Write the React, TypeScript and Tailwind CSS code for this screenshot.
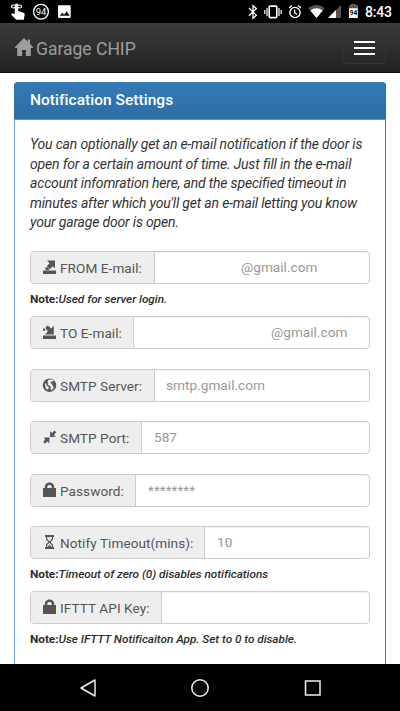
import type { ReactNode } from "react";

function StatusBar() {
  return (
    <header className="flex h-[23px] shrink-0 items-center bg-black text-white">
      <svg className="h-[23px] w-[100px]" viewBox="0 0 100 23" fill="none">
        <path d="M11.500 6.500c0-2 3-2 5 0 2-2 5-2 5 0s-3 2-5 0c-2 2-5 2-5 0Z" stroke="#fff" strokeWidth="1.200" />
        <path d="M14.800 4.300q1.700-1.500 3.400 0V11l5.200 1.800c1.500.5 1.400 1.200 1.200 2.300l-.8 4.600h-7.500L11 14.500l1.200-1.200 2.600.700Z" fill="#fff" />
        <circle cx="41" cy="11.700" r="7.400" stroke="#fff" strokeWidth="1.300" />
        <text x="41" y="15.100" textAnchor="middle" fill="#fff" fontSize="9.500" fontFamily="Roboto, sans-serif">94</text>
        <rect x="58" y="5.300" width="12.700" height="12.700" rx="1.200" fill="#fff" />
        <path d="m59.800 15.700 2.400-3 1.900 2 2.600-3.400 3 4.400Z" fill="#111" />
      </svg>
      <svg className="ml-auto h-[23px] w-[120px]" viewBox="245 0 120 23" fill="none">
        <path d="m249 8 7.400 7.300-3.400 3V5.700l3.400 2.800-7.400 7.300" stroke="#fff" strokeWidth="1.300" />
        <rect x="269.200" y="6.100" width="7.600" height="11.500" rx="1" stroke="#fff" strokeWidth="1.600" />
        <path d="M267 8v8m-2.200-6v4M279 8v8m2.200-6v4" stroke="#fff" strokeWidth="1.200" />
        <circle cx="295" cy="12.500" r="5.100" stroke="#fff" strokeWidth="1.400" />
        <path d="M294.700 9.500v3.300l2.500 1.500M289 8l3-2.500m6 0 3 2.500" stroke="#fff" strokeWidth="1.200" />
        <path d="M308.200 8q8.300-6 16.600 0l-8.300 10Z" fill="#555" />
        <path d="M310.300 10.500q6.200-4.500 12.400 0l-6.200 7.500Z" fill="#fff" />
        <path d="m328 18 13-13v13Z" fill="#555" />
        <path d="m328 18 8-8V18Z" fill="#fff" />
        <path d="M349 5.700h2.300V4.300h4v1.400h2.500V18H349Z" fill="#fff" />
        <path d="M351.300 4.300h4v1.400h2.500v2.600H349V5.700h2.300Z" fill="#555" />
        <text x="353.400" y="14.800" textAnchor="middle" fill="#000" fontSize="6.500" fontWeight="700" fontFamily="Roboto, sans-serif">94</text>
      </svg>
      <span className="mt-px mr-[8px] w-[27px] text-[14px] leading-[20px] font-medium tracking-[-0.200px] whitespace-nowrap">8:43</span>
    </header>
  );
}

function Navbar() {
  return (
    <nav className="flex h-[50px] shrink-0 items-center border-b border-[#101010] bg-linear-to-b from-[#3c3c3c] to-[#222] pr-[14px] pl-[15px] text-[#9d9d9d]">
      <svg className="mb-px h-[18px] w-[18px]" viewBox="0 0 18 18" fill="currentColor">
        <path d="m9 0 3.600 3.600V1.500H15v4.500L18 9v1h-2.200v8h-4.900v-6H7.100v6H2.200v-8H0V9Z" />
      </svg>
      <span className="mt-[3px] ml-[3px] text-[17.500px] leading-[20px] whitespace-nowrap">Garage CHIP</span>
      <button className="ml-auto flex h-[33px] w-[43px] flex-col items-center justify-center gap-[4px] rounded border border-[#333]">
        <span className="h-[2px] w-[21px] bg-white" />
        <span className="h-[2px] w-[21px] bg-white" />
        <span className="h-[2px] w-[21px] bg-white" />
      </button>
    </nav>
  );
}

const icons: Record<string, ReactNode> = {
  from: <path d="M0 10.500h13V14H0ZM4 .500h8V8.300L9.800 6.200 6.800 9.200 3.800 6.300 6.600 3.200ZM2.500 7.200h1.700l2 2V10H2.500Z" />,
  to: <path d="M0 10.500h13V14H0ZM2.300 2.800 4.800.300 8 3.500 10.800.800V9.500H2l2.800-3ZM0 3.500h2.200v2.200H0Z" />,
  globe: (
    <>
      <circle cx="6.500" cy="7.300" r="6.700" />
      <path fill="#eee" d="M5.600 1.800 9 1.500l1.800 1.400-1.400.8-1.300-.5-.4 1.700 1.300 1 .6 2.200 1 .3-.3 2-2 2.200-.9-2.700.3-1.700-1.800-.6-1.500-1.600.8-1.700-.8-.9ZM1.400 5.200l1.500.5 1.200 2.200 1.700 1-.3 2-1 .9-2-1.800-.1-2Z" />
    </>
  ),
  resize: <path d="m7 7 .2-6 1.900 1.900 2.400-2.400L13.300 2.300l-2.400 2.400 2.100 2ZM6.500 7.300 6.200 13.300l-2-1.900L2 13.700.200 11.900l2.200-2.300L.500 7.700Z" />,
  lock: <path fillRule="evenodd" d="M1.800 5V4c0-6 9.400-6 9.400 0v1h1.300q.5 0 .5.500V14H0V5.500Q0 5 .5 5Zm2.500 0h4.400V4c0-2.600-4.400-2.600-4.400 0Z" />,
  hourglass: <path fillRule="evenodd" d="M2 0h9v2h-1v2.500L7.700 7 10 9.700V12h1v2H2v-2h1V9.700L5.300 7 3 4.500V2H2Zm2.200 2v2L6.500 6.500v1.200L4.200 10v2h.5L6.500 9.500 8.300 12h.5v-2L6.500 7.700V6.500L8.800 4V2Z" />,
};

interface FieldProps {
  icon: string;
  label: string;
  width: string;
  value?: string;
  inputClass?: string;
}

function Field({ icon, label, width, value, inputClass = "pl-[12px]" }: FieldProps) {
  return (
    <div className="flex h-[33px] w-full overflow-hidden rounded-[4px] border border-[#ccc] bg-white">
      <div className={`flex shrink-0 items-center border-r border-[#ccc] bg-[#eee] pl-[12px] text-[#555] ${width}`}>
        <svg className="mb-px h-[14px] w-[13px] shrink-0 overflow-visible" viewBox="0 0 13 14" fill="currentColor">{icons[icon]}</svg>
        <span className="mt-[2px] ml-[4px] text-[13.600px] leading-[19px] tracking-[0.060px] whitespace-nowrap">{label}</span>
      </div>
      <div className={`flex flex-1 items-center text-[13.600px] leading-[19px] tracking-[0.030px] text-[#999] shadow-[inset_0_1px_1px_#00000010] ${inputClass}`}>{value}</div>
    </div>
  );
}

function Note({ children }: { children: string }) {
  return (
    <p className="flex h-[32px] items-center pb-px text-[11.800px] leading-[16px] font-medium tracking-[-0.040px] whitespace-nowrap text-[#2c2c2c]">
      <b className="font-bold">Note:</b>
      <i>{children}</i>
    </p>
  );
}

export default function App() {
  return (
    <div className="flex h-[711px] w-[400px] flex-col overflow-hidden bg-white font-[Roboto,sans-serif]">
      <StatusBar />
      <Navbar />
      <main className="min-h-0 flex-1 overflow-hidden px-[14px] pt-[9px]">
        <section className="h-[620px] rounded-[4px] border border-[#337ab7] border-l-[#6da2d0]">
          <h1 className="-mx-px -mt-px flex h-[38px] items-center rounded-t-[4px] border-b border-[#5a93c5] bg-linear-to-b from-[#337ab7] to-[#2e6da4] pt-px pl-[16px] text-[15.500px] font-medium tracking-[0.030px] text-white">Notification Settings</h1>
          <div className="pt-[15px] pr-[15px] pl-[15px]">
            <p className="mb-[18px] text-[14px] leading-[19.500px] tracking-[-0.175px] whitespace-nowrap text-[#333] italic">
              <span className="block">You can optionally get an e-mail notification if the door is</span>
              <span className="block">open for a certain amount of time. Just fill in the e-mail</span>
              <span className="block">account infomration here, and the specified timeout in</span>
              <span className="block">minutes after which you'll get an e-mail letting you know</span>
              <span className="block">your garage door is open.</span>
            </p>
            <Field icon="from" label="FROM E-mail:" width="w-[124px]" value="@gmail.com" inputClass="pl-[86px]" />
            <Note>Used for server login.</Note>
            <Field icon="to" label="TO E-mail:" width="w-[103px]" value="@gmail.com" inputClass="pl-[137px]" />
            <div className="h-[20px]" />
            <Field icon="globe" label="SMTP Server:" width="w-[124px]" value="smtp.gmail.com" inputClass="pl-[11px]" />
            <div className="h-[19px]" />
            <Field icon="resize" label="SMTP Port:" width="w-[111px]" value="587" />
            <div className="h-[20px]" />
            <Field icon="lock" label="Password:" width="w-[105px]" value="********" />
            <div className="h-[19px]" />
            <Field icon="hourglass" label="Notify Timeout(mins):" width="w-[174px]" value="10" />
            <Note>Timeout of zero (0) disables notifications</Note>
            <Field icon="lock" label="IFTTT API Key:" width="w-[131px]" />
            <Note>Use IFTTT Notificaiton App. Set to 0 to disable.</Note>
          </div>
        </section>
      </main>
      <footer className="h-[47px] shrink-0 bg-black">
        <svg className="h-[47px] w-[400px]" viewBox="0 0 400 47" fill="none" stroke="#eee" strokeWidth="1.500">
          <path d="m95 16-14 8 14 8Z" strokeLinejoin="round" />
          <circle cx="200" cy="24" r="8.200" />
          <rect x="305.500" y="17" width="14.500" height="14" />
        </svg>
      </footer>
    </div>
  );
}
